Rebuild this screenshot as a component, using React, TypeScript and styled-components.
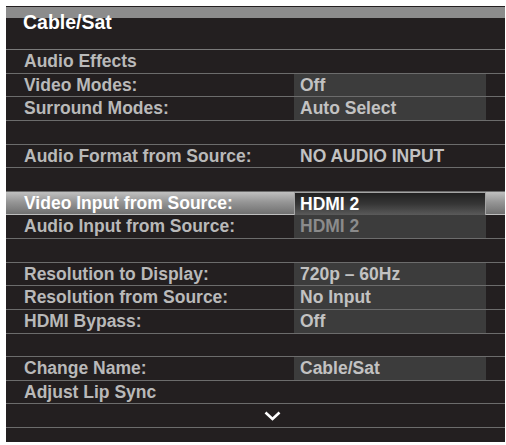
import React from 'react';
import styled, { createGlobalStyle } from 'styled-components';

const GlobalStyle = createGlobalStyle`
  html, body {
    margin: 0;
    padding: 0;
    background: #ffffff;
  }
  body {
    font-family: "Liberation Sans", Arial, Helvetica, sans-serif;
  }
`;

const Panel = styled.div`
  margin: 6px 0 0 6px;
  width: 499px;
  height: 436px;
  background: #231f20;
  display: flex;
  flex-direction: column;
`;

const Header = styled.div`
  box-sizing: border-box;
  height: 44px;
  padding: 6px 0 0 17px;
  background: linear-gradient(#231f20 0 1px, #8c8c8c 1px 12px, transparent 12px);
  border-bottom: 1px solid #7a7a7a;
`;

const Title = styled.div`
  font-size: 19.5px;
  line-height: 20px;
  font-weight: 700;
  color: #ffffff;
`;

const Row = styled.div<{ $active?: boolean }>`
  box-sizing: border-box;
  height: 23.625px;
  display: grid;
  grid-template-columns: 288px 192px 1fr;
  align-items: stretch;
  border-bottom: 1px solid ${(p) => (p.$active ? 'transparent' : '#6c6c6c')};
  background: ${(p) =>
    p.$active ? 'linear-gradient(#c0c0c0, #969696 45%, #707070)' : 'transparent'};
`;

const Label = styled.div<{ $active?: boolean }>`
  padding: 1px 0 0 18px;
  font-size: 17.5px;
  line-height: 21.6px;
  font-weight: 700;
  color: ${(p) => (p.$active ? '#ffffff' : '#b9b9b9')};
  white-space: nowrap;
`;

const Value = styled.div<{ $boxed?: boolean; $active?: boolean; $dim?: boolean }>`
  box-sizing: border-box;
  padding: 1px 0 0 6px;
  font-size: 17.5px;
  line-height: 21.6px;
  font-weight: 700;
  white-space: nowrap;
  color: ${(p) => (p.$active ? '#ffffff' : p.$dim ? '#8b8b8b' : '#c2c2c2')};
  background: ${(p) =>
    p.$active
      ? 'linear-gradient(#202020, #363636 50%, #5a5a5a)'
      : p.$boxed
        ? '#3c3c3c'
        : 'transparent'};
  border: ${(p) => (p.$active ? '1px solid #a4a4a4' : 'none')};
  padding-left: ${(p) => (p.$active ? '5px' : '6px')};
`;

const ChevronRow = styled.div`
  box-sizing: border-box;
  height: 23.625px;
  display: flex;
  align-items: center;
  justify-content: center;
  padding-left: 33px;
  border-bottom: 1px solid #6c6c6c;
`;

type Item = {
  label?: string;
  value?: string;
  boxed?: boolean;
  active?: boolean;
  dim?: boolean;
};

const items: Item[] = [
  { label: 'Audio Effects' },
  { label: 'Video Modes:', value: 'Off', boxed: true },
  { label: 'Surround Modes:', value: 'Auto Select', boxed: true },
  {},
  { label: 'Audio Format from Source:', value: 'NO AUDIO INPUT' },
  {},
  { label: 'Video Input from Source:', value: 'HDMI 2', boxed: true, active: true },
  { label: 'Audio Input from Source:', value: 'HDMI 2', boxed: true, dim: true },
  {},
  { label: 'Resolution to Display:', value: '720p – 60Hz', boxed: true },
  { label: 'Resolution from Source:', value: 'No Input', boxed: true },
  { label: 'HDMI Bypass:', value: 'Off', boxed: true },
  {},
  { label: 'Change Name:', value: 'Cable/Sat', boxed: true },
  { label: 'Adjust Lip Sync' },
];

const Chevron = () => (
  <svg width="17" height="10" viewBox="0 0 17 10">
    <path d="M1.5 1.5 L8.5 8 L15.5 1.5" fill="none" stroke="#ffffff" strokeWidth="2.6" />
  </svg>
);

const App: React.FC = () => {
  return (
    <>
      <GlobalStyle />
      <Panel>
        <Header>
          <Title>Cable/Sat</Title>
        </Header>
        {items.map((item, i) => (
          <Row key={i} $active={item.active}>
            <Label $active={item.active}>{item.label}</Label>
            {item.value ? (
              <Value $boxed={item.boxed} $active={item.active} $dim={item.dim}>
                {item.value}
              </Value>
            ) : (
              <div />
            )}
          </Row>
        ))}
        <ChevronRow>
          <Chevron />
        </ChevronRow>
      </Panel>
    </>
  );
};

export default App;
